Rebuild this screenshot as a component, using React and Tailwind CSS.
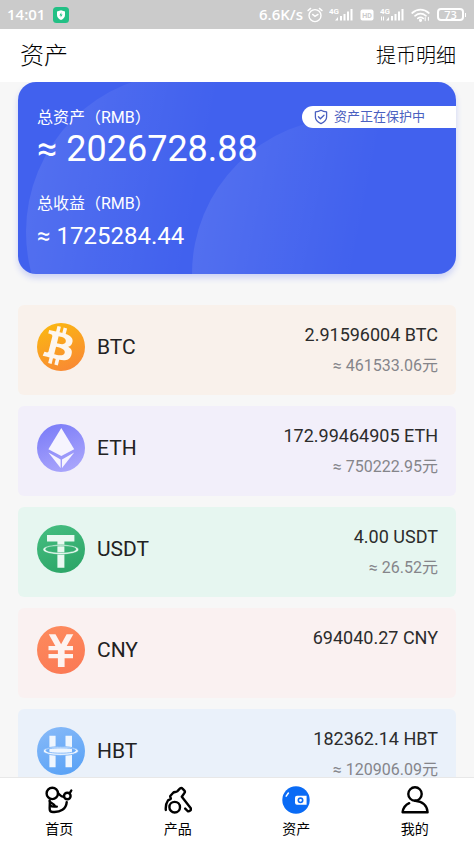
import { clsx } from "clsx";

// coin drawings share a 48x48 box
const Coin = ({ id, from, to, children }) => (
  <svg viewBox="0 0 48 48" className="size-12 shrink-0" aria-hidden="true">
    <defs>
      <linearGradient id={id} x1="0.2" y1="0" x2="0.6" y2="1">
        <stop offset="0" stopColor={from} />
        <stop offset="1" stopColor={to} />
      </linearGradient>
    </defs>
    <circle cx="24" cy="24" r="24" fill={`url(#${id})`} />
    {children}
  </svg>
);

const BtcIcon = () => (
  <Coin id="btc" from="#fbb811" to="#f98a33">
    <path
      transform="translate(-9.4 -7.9) scale(2.6)"
      fill="#fdf6ee"
      fillRule="evenodd"
      d="M17.288 10.291c.24-1.59-.974-2.45-2.64-3.03l.54-2.153-1.315-.33-.525 2.107c-.345-.087-.705-.167-1.064-.25l.526-2.127-1.32-.33-.54 2.165c-.285-.067-.565-.132-.84-.2l-1.815-.45-.35 1.407s.975.225.955.236c.535.136.63.486.615.766l-1.477 5.92c-.075.166-.24.406-.614.314.015.02-.96-.24-.96-.24l-.66 1.51 1.71.426.93.242-.54 2.19 1.32.327.54-2.17c.36.1.705.19 1.05.273l-.51 2.154 1.32.33.545-2.19c2.24.427 3.93.257 4.64-1.774.57-1.637-.03-2.58-1.217-3.196.854-.193 1.5-.76 1.68-1.93zm-3.01 4.22c-.404 1.64-3.157.75-4.05.53l.72-2.9c.896.23 3.757.67 3.33 2.37zm.41-4.24c-.37 1.49-2.662.735-3.405.55l.654-2.64c.744.18 3.137.524 2.75 2.084z"
    />
  </Coin>
);

const EthIcon = () => (
  <Coin id="eth" from="#7b7cf8" to="#a9a5fb">
    <g fill="#f6f4fe">
      <path d="M24.3 4 37.2 25.2 24.3 32 11.4 25.2z" />
      <path d="M11.4 28.6 23.6 35.6V44z" />
      <path d="M37.2 28.6 25 35.6V44z" />
    </g>
  </Coin>
);

const UsdtIcon = () => (
  <Coin id="usdt" from="#45bd80" to="#2da668">
    <path d="M10 10h27.4v6.4H27.4v26.4h-7V16.400H10z" fill="#eaf8f1" />
    <path
      fill="#eaf8f1"
      stroke="#38b174"
      strokeWidth="0.500"
      fillRule="evenodd"
      d="M6 24.600c0-2.800 7.700-4.800 17.800-4.800s17.800 2 17.800 4.800-7.700 4.900-17.800 4.900S6 27.400 6 24.600zm2.600-.4c0 1.900 6.600 3.300 15.200 3.300s15.200-1.400 15.200-3.300-6.600-3.100-15.200-3.100-15.200 1.200-15.200 3.100z"
    />
  </Coin>
);

const CnyIcon = () => (
  <Coin id="cny" from="#fd8a5d" to="#fb7a55">
    <path
      d="M11.800 8.200h6.700l5.600 10 5.500-10h6.700L29.700 20H36v4.200h-8.400v3.900H36v4.200h-8.400v8.700h-6.700v-8.700h-9.400v-4.200h9.400v-3.900h-9.400V20h6.900z"
      fill="#fdf3f0"
    />
  </Coin>
);

const HbtIcon = () => (
  <Coin id="hbt" from="#86b9f8" to="#5ba3f6">
    <path d="M12.400 8.700h6.200V21h9.900V8.700h6.500v31.500h-6.500V27h-9.900v13.200h-6.200z" fill="#eff6fe" />
    <path
      fill="#eff6fe"
      stroke="#6dacf7"
      strokeWidth="0.800"
      fillRule="evenodd"
      d="M6.200 24c0-2.600 7.600-4.400 17.600-4.400S41.400 21.400 41.400 24s-7.600 4.400-17.600 4.400S6.200 26.600 6.200 24zm2.800-.6c0 1.700 6.300 2.800 14.800 2.800s14.800-1.100 14.800-2.800-6.300-2.500-14.800-2.500S9 21.700 9 23.400z"
    />
  </Coin>
);

const coins = [
  { name: "BTC", amount: "2.91596004", rmb: "461533.06", bg: "bg-[#f9f1eb]", icon: <BtcIcon /> },
  { name: "ETH", amount: "172.99464905", rmb: "750222.95", bg: "bg-[#f2effa]", icon: <EthIcon /> },
  { name: "USDT", amount: "4.00", rmb: "26.52", bg: "bg-[#e6f6f0]", icon: <UsdtIcon /> },
  { name: "CNY", amount: "694040.27", rmb: null, bg: "bg-[#faf1f1]", icon: <CnyIcon /> },
  { name: "HBT", amount: "182362.14", rmb: "120906.09", bg: "bg-[#eaf1fa]", icon: <HbtIcon /> },
];

// bottom tab icons, 28x28 box
const navProps = {
  viewBox: "0 0 28 28",
  className: "size-7",
  fill: "none",
  stroke: "#000",
  strokeWidth: 2.4,
  strokeLinecap: "round",
  strokeLinejoin: "round",
  "aria-hidden": true,
};

const tabs = [
  {
    label: "首页",
    icon: (
      <svg {...navProps}>
        <circle cx="7.300" cy="7.400" r="5.700" />
        <circle cx="22.300" cy="10" r="3.300" />
        <path d="M13 7.500c1.800.4 2.200 3.600 6 3.200M24.600 7.400l1.700-2.900" />
        <path d="M4.600 14.500c.8 3-.4 6.500.2 9.500.3 1.700 1.700 2 3.200 2 7.500.5 13.200-3 13.700-9.800" />
        <path d="M5 15.800c1.600 2.200 4 1.400 5 4.400M5.200 19.400c1.800 1.800 4 1 6.600 1.200" />
      </svg>
    ),
  },
  {
    label: "产品",
    icon: (
      <svg {...navProps}>
        <path d="M1.800 24c-.3-3.800.2-6.800 2.200-9.600l2.700-1.400c.6-1-.9-1.800-.4-3l2.900-3.300c1.200-.9 2.800-.4 4-1.300l2.900-3c.9-.7 1.700-.6 2.400.2l1.900 2c.7.8.7 1.500.1 2.300l-2.700 3.900 9 11.400c1 1.500-1.800 4-3.200 2.800l-2.400-2.400" />
        <circle cx="10.700" cy="21.200" r="5.300" />
      </svg>
    ),
  },
  {
    label: "资产",
    active: true,
    icon: (
      <svg viewBox="0 0 28 28" className="size-7" aria-hidden="true">
        <circle cx="14" cy="14" r="13.700" fill="#0a6bf5" />
        <path d="M4.200 10.200 6.400 7" stroke="#fff" strokeWidth="1.500" strokeLinecap="round" />
        <path d="M15 9.800h9.600v9H15a2 2 0 0 1-2-2v-5a2 2 0 0 1 2-2z" fill="#fff" />
        <circle cx="18.500" cy="14.300" r="2.200" fill="#fff" stroke="#0a6bf5" strokeWidth="1.600" />
      </svg>
    ),
  },
  {
    label: "我的",
    icon: (
      <svg {...navProps}>
        <circle cx="14" cy="8" r="6.700" />
        <path d="M8.200 17.200c-3.600 1.600-6 4.600-6.600 9h25c-.4-6.600-5.400-10.800-12.400-11.400" />
      </svg>
    ),
  },
];

const Signal = ({ data }) => (
  <svg viewBox="0 0 25 14" className="h-[14px] w-[25px]" fill="#fff" aria-hidden="true">
    <path d="M6 12.500 9 9v3.500zM11 8h2v4.500h-2zM14.500 6h2v6.500h-2zM18 3.500h2v9h-2zM21.500 1h2v11.500h-2z" />
    {data && <path d="M1 8.500h1v4H1zM3 8.500h1v4H3z" />}
    <text x="0" y="6" fontSize="8" fontWeight="700" fontFamily="Roboto, sans-serif">
      4G
    </text>
  </svg>
);

const StatusBar = () => (
  <div className="flex h-[29px] shrink-0 items-center justify-between bg-[#cbcbcb] pr-2 pl-[7px] font-['Open_Sans',sans-serif] text-[15px] font-semibold text-white">
    <div className="flex items-center gap-2">
      <span>14:01</span>
      <svg viewBox="0 0 16 16" className="size-4" aria-hidden="true">
        <rect width="16" height="16" rx="3.500" fill="#22c085" />
        <path d="M8 3.200 12 4.500v3.600c0 2.400-1.800 4-4 5-2.200-1-4-2.600-4-5V4.500z" fill="#fff" />
        <path d="M8.400 5.200 6.400 8.400h1.400l-.2 2.200 2-3.200H8.200z" fill="#22c085" />
      </svg>
    </div>
    <div className="flex items-center gap-[6px]">
      <div className="flex items-center gap-1">
        <span>6.6K/s</span>
        <svg
          viewBox="0 0 16 16"
          className="size-4"
          fill="none"
          stroke="#fff"
          strokeWidth="1.400"
          strokeLinecap="round"
          aria-hidden="true"
        >
          <circle cx="8" cy="8.600" r="6" />
          <path d="M1 3.600 3.600 1.400M15 3.600l-2.600-2.200M5.600 7.400 8 9.400l3-2" />
        </svg>
      </div>
      <Signal />
      <svg viewBox="0 0 14 12" className="h-3 w-[14px]" aria-hidden="true">
        <rect x="0.500" y="0.500" width="13" height="11" rx="2" fill="#fff" />
        <text x="7" y="8.500" fontSize="7" fontWeight="700" textAnchor="middle" fill="#cbcbcb" fontFamily="Roboto, sans-serif">
          HD
        </text>
      </svg>
      <Signal data />
      <svg
        viewBox="0 0 20 14"
        className="h-[14px] w-5"
        fill="none"
        stroke="#fff"
        strokeWidth="1.700"
        strokeLinecap="round"
        aria-hidden="true"
      >
        <path d="M1.200 5c4.800-4.400 11.800-4.400 16.600 0M4 7.800c3.400-2.800 7.600-2.800 11 0M6.800 10.400c1.700-1.200 3.700-1.200 5.400 0" />
        <circle cx="9.500" cy="12.300" r="0.800" fill="#fff" />
        <path d="M14.200 12.600v-3M17.400 9.200v3" strokeWidth="1.100" />
      </svg>
      <div className="flex items-center gap-px">
        <span className="flex h-[13px] w-[27px] items-center justify-center rounded-sm border-2 border-white text-[11px] leading-none">
          73
        </span>
        <span className="h-1 w-px bg-white" />
      </div>
    </div>
  </div>
);

const AssetCard = () => (
  <section className="relative overflow-hidden rounded-[18px] bg-[#4161ee] px-[19px] pt-[26px] pb-[22px] text-white">
    <svg
      viewBox="0 0 438 192"
      preserveAspectRatio="none"
      className="absolute inset-0 size-full"
      aria-hidden="true"
    >
      <defs>
        <linearGradient id="ring" x1="0" y1="0.500" x2="0.500" y2="0.600">
          <stop offset="0" stopColor="#fff" stopOpacity="0.090" />
          <stop offset="1" stopColor="#fff" stopOpacity="0" />
        </linearGradient>
      </defs>
      <circle cx="167" cy="150" r="159" fill="url(#ring)" />
      <circle cx="330" cy="192" r="156" fill="url(#ring)" />
    </svg>
    <div className="relative">
      <p className="text-base leading-5">总资产（RMB）</p>
      <p className="text-4xl leading-[42px]">≈ 2026728.88</p>
      <p className="mt-6 text-base leading-5">总收益（RMB）</p>
      <p className="mt-[6px] text-2xl leading-8">≈ 1725284.44</p>
    </div>
    <div className="absolute top-6 right-0 flex h-[22px] w-[154px] items-center gap-[6px] rounded-l-full bg-white pl-3 text-[13px] text-[#4a60c0]">
      <svg
        viewBox="0 0 14 16"
        className="h-4 w-[14px]"
        fill="none"
        stroke="#4a60c0"
        strokeWidth="1.300"
        strokeLinecap="round"
        strokeLinejoin="round"
        aria-hidden="true"
      >
        <path d="M7 1.300c1.600 1.100 3.500 1.600 5.600 1.600v5.200c0 3.200-2.400 5.200-5.600 6.600-3.200-1.400-5.600-3.400-5.600-6.600V2.900c2.100 0 4-.5 5.600-1.600z" />
        <path d="M4.400 7.800l2 2 3.600-3.600" />
      </svg>
      <span>资产正在保护中</span>
    </div>
  </section>
);

const CoinRow = ({ coin }) => (
  <li className={clsx("flex h-[90px] items-start rounded-md pt-[18px] pr-[18px] pl-[19px]", coin.bg)}>
    {coin.icon}
    <span className="ml-3 text-[21px] leading-[48px] text-[#222]">{coin.name}</span>
    <div className="ml-auto text-right">
      <p className="text-lg leading-6 text-[#2c2c2c]">
        {coin.amount} {coin.name}
      </p>
      {coin.rmb && <p className="mt-[7px] text-base leading-6 text-[#85858a]">≈ {coin.rmb}元</p>}
    </div>
  </li>
);

export default function App() {
  return (
    <div
      lang="zh-CN"
      className="flex h-screen flex-col bg-[#f7f7f7] font-[Roboto,'Noto_Sans_CJK_SC',sans-serif]"
    >
      <StatusBar />
      <header className="flex h-[53px] shrink-0 items-center justify-between bg-white pr-[18px] pl-5 font-light text-black">
        <h1 className="text-2xl">资产</h1>
        <a href="#records" className="text-xl">
          提币明细
        </a>
      </header>

      <main className="min-h-0 flex-1 overflow-y-auto px-[18px] pb-4 [scrollbar-width:none]">
        <div className="rounded-[18px] shadow-[0_4px_6px_#cdd3f5]">
          <AssetCard />
        </div>
        <ul className="mt-[31px] flex flex-col gap-[11px]">
          {coins.map((coin) => (
            <CoinRow key={coin.name} coin={coin} />
          ))}
        </ul>
      </main>

      <nav className="grid h-[65px] shrink-0 grid-cols-4 border-t border-[#e8e8e8] bg-white">
        {tabs.map((tab) => (
          <a
            key={tab.label}
            href="#tab"
            aria-current={tab.active ? "page" : undefined}
            className="flex flex-col items-center gap-[5px] pt-2 text-sm leading-5 text-black"
          >
            {tab.icon}
            {tab.label}
          </a>
        ))}
      </nav>
    </div>
  );
}
